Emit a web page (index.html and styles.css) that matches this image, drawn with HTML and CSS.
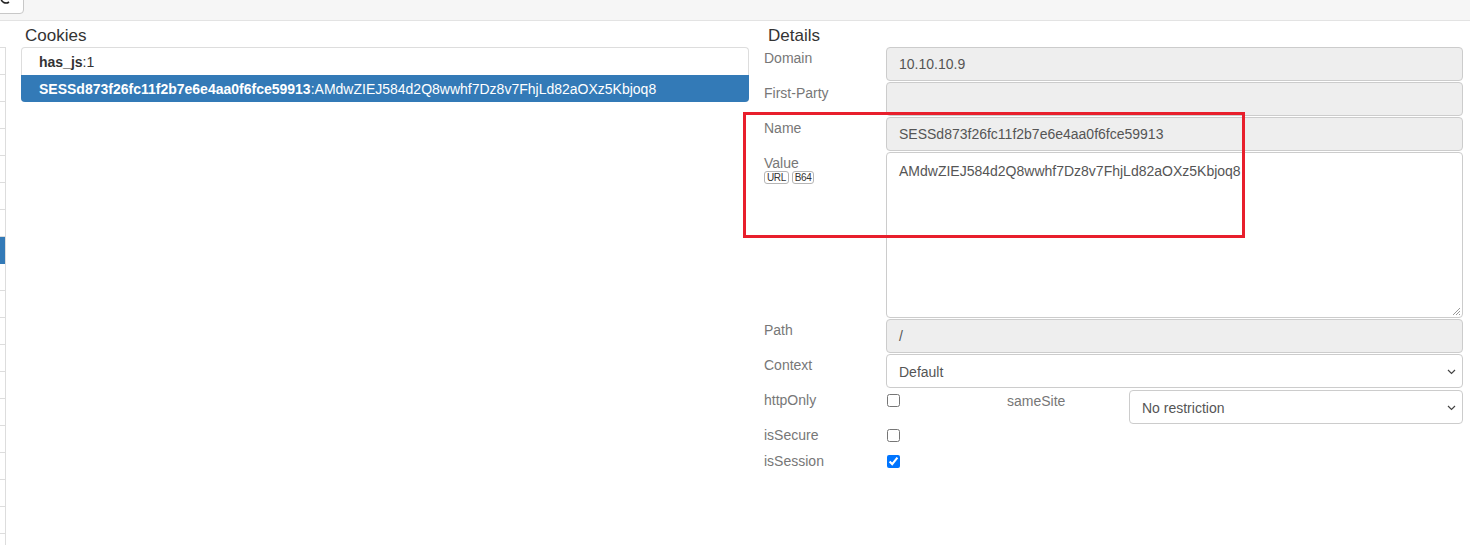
FILE: index.html
```html
<!DOCTYPE html>
<html>
<head>
<meta charset="utf-8">
<link rel="stylesheet" href="styles.css">
</head>
<body>
<div class="topbar">
  <div class="tool-btn">
    <svg width="14" height="12" viewBox="0 0 14 12"><path d="M1 0 A5 5 0 0 0 9 4" fill="none" stroke="#222" stroke-width="1.6"/></svg>
  </div>
</div>
<div class="main">
  <ul class="sidebar">
    <li></li><li></li><li></li><li></li><li></li><li></li><li></li>
    <li class="active"></li>
    <li></li><li></li><li></li><li></li><li></li><li></li><li></li><li></li><li></li><li></li><li></li>
  </ul>
  <section class="cookies">
    <h3 class="heading">Cookies</h3>
    <ul class="cookie-list">
      <li class="cookie-item"><b>has_js</b>:1</li>
      <li class="cookie-item active"><b>SESSd873f26fc11f2b7e6e4aa0f6fce59913</b>:AMdwZIEJ584d2Q8wwhf7Dz8v7FhjLd82aOXz5Kbjoq8</li>
    </ul>
  </section>
  <section class="details">
    <h3 class="heading">Details</h3>
    <div class="form">
      <label class="lbl">Domain</label>
      <div class="input disabled">10.10.10.9</div>
      <label class="lbl">First-Party</label>
      <div class="input disabled"></div>
      <label class="lbl">Name</label>
      <div class="input disabled">SESSd873f26fc11f2b7e6e4aa0f6fce59913</div>
      <div class="lbl">Value
        <div class="badges"><span class="badge">URL</span><span class="badge">B64</span></div>
      </div>
      <div class="textarea">AMdwZIEJ584d2Q8wwhf7Dz8v7FhjLd82aOXz5Kbjoq8
        <svg class="grip" width="9" height="9" viewBox="0 0 9 9"><path d="M8 1L1 8M8 4L4 8M8 7L7 8" stroke="#999" stroke-width="1"/></svg>
      </div>
      <label class="lbl">Path</label>
      <div class="input disabled">/</div>
      <label class="lbl">Context</label>
      <div class="select-wrap">
        <select class="select"><option>Default</option></select>
        <svg class="chevron" width="9" height="6" viewBox="0 0 9 6"><path d="M1 1L4.5 4.5L8 1" fill="none" stroke="#444" stroke-width="1.2"/></svg>
      </div>
      <label class="lbl">httpOnly</label>
      <div class="split">
        <div class="chk-cell"><input type="checkbox"></div>
        <label class="lbl">sameSite</label>
        <div class="select-wrap">
          <select class="select"><option>No restriction</option></select>
          <svg class="chevron" width="9" height="6" viewBox="0 0 9 6"><path d="M1 1L4.5 4.5L8 1" fill="none" stroke="#444" stroke-width="1.2"/></svg>
        </div>
      </div>
      <label class="lbl short">isSecure</label>
      <div class="chk-cell short"><input type="checkbox"></div>
      <label class="lbl short">isSession</label>
      <div class="chk-cell short"><input type="checkbox" checked></div>
    </div>
  </section>
  <div class="annotation"></div>
</div>
</body>
</html>
```

FILE: styles.css
```css
* { box-sizing: border-box; }
html, body { margin: 0; padding: 0; background: #fff; }
body {
  font-family: "Liberation Sans", Arial, Helvetica, sans-serif;
  font-size: 14px;
  line-height: 20px;
  color: #333;
  overflow: hidden;
  height: 545px;
}
.topbar {
  height: 21px;
  background: #f6f6f6;
  border-bottom: 1px solid #e3e3e3;
  position: relative;
}
.tool-btn {
  position: absolute;
  left: -10px;
  top: -10px;
  width: 34px;
  height: 24px;
  background: #fff;
  border: 1px solid #c8c8c8;
  border-radius: 4px;
  display: flex;
  align-items: flex-end;
  justify-content: flex-start;
  padding: 0 0 3px 9px;
}
.main {
  display: flex;
  align-items: flex-start;
  position: relative;
}
.sidebar {
  list-style: none;
  margin: 26px 0 0 0;
  padding: 0;
  width: 6px;
  border-right: 1px solid #ddd;
  border-top: 1px solid #ddd;
}
.sidebar li {
  height: 27px;
  border-bottom: 1px solid #ddd;
}
.sidebar li.active {
  background: #337ab7;
  border-bottom-color: #337ab7;
}
.heading {
  margin: 0;
  height: 26px;
  padding: 5px 0 0 4px;
  font-size: 17px;
  line-height: 20px;
  font-weight: normal;
  color: #333;
}
.cookies {
  margin-left: 15px;
  width: 728px;
}
.cookie-list {
  list-style: none;
  margin: 0;
  padding: 0;
  border: 1px solid #ddd;
  border-radius: 4px;
  border-bottom: none;
}
.cookie-item {
  height: 27px;
  padding: 4px 17px 3px;
  white-space: nowrap;
  color: #333;
}
.cookie-item b { font-weight: bold; }
.cookie-item.active {
  background: #337ab7;
  color: #fff;
  margin: 0 -1px;
  padding-left: 18px;
  border-radius: 0 0 4px 4px;
}
.details {
  margin-left: 15px;
  width: 699px;
}
.details .heading { padding-left: 4px; }
.form {
  display: grid;
  grid-template-columns: 122px 577px;
  row-gap: 1px;
  color: #555;
}
.lbl {
  color: #777;
  padding-top: 1px;
  line-height: 20px;
  font-size: 14px;
}
.input {
  height: 34px;
  border: 1px solid #ccc;
  border-radius: 4px;
  padding: 6px 12px;
  color: #555;
  background: #fff;
}
.input.disabled { background: #eee; }
.textarea {
  position: relative;
  height: 166px;
  border: 1px solid #ccc;
  border-radius: 4px;
  padding: 8px 12px;
  color: #555;
  background: #fff;
}
.grip { position: absolute; right: 1px; bottom: 1px; }
.badges { display: flex; gap: 3px; margin-top: -2px; }
.badge {
  font-size: 10px;
  line-height: 10px;
  height: 13px;
  padding: 1px 2px 0;
  letter-spacing: -0.4px;
  border: 1px solid #b5b5b5;
  border-radius: 3px;
  color: #333;
}
.select-wrap { position: relative; }
.select {
  display: block;
  height: 34px;
  border: 1px solid #ccc;
  border-radius: 4px;
  padding: 7px 12px 5px;
  font-family: inherit;
  font-size: 14px;
  line-height: 20px;
  color: #555;
  background: #fff;
  width: 100%;
  appearance: none;
  -webkit-appearance: none;
}
.chevron {
  position: absolute;
  right: 7px;
  top: 15px;
  pointer-events: none;
}
.split {
  display: grid;
  grid-template-columns: 121px 122px 334px;
  padding-top: 1px;
  margin-bottom: -1px;
}
.split .lbl { padding-top: 1px; }
.chk-cell input { margin: 4px 0 0 1px; width: 13px; height: 13px; }
.short { height: 25px; }
.chk-cell.short input { margin-top: 5px; }
.annotation {
  position: absolute;
  left: 743px;
  top: 91px;
  width: 502px;
  height: 126px;
  border: 3px solid #e81f2c;
  pointer-events: none;
}
```
